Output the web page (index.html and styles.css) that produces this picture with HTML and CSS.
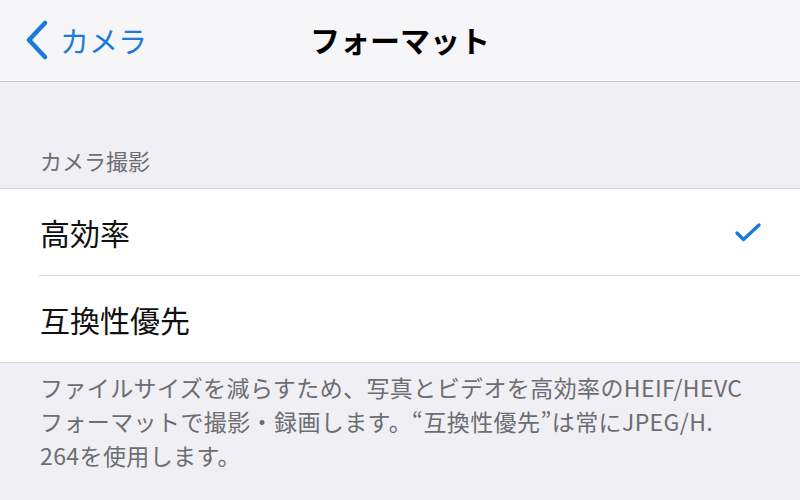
FILE: index.html
```html
<!DOCTYPE html>
<html lang="ja">
  <head>
    <meta charset="utf-8" />
    <title>フォーマット</title>
    <link rel="stylesheet" href="styles.css">
  </head>
  <body>
    <div class="navbar">
      <div class="back">
        <svg class="chevron" width="26" height="42" viewBox="0 0 26 42">
          <path d="M21 4 L5 21 L21 38" fill="none" stroke="#1c7bd8" stroke-width="4.6" stroke-linecap="round" stroke-linejoin="round" />
        </svg>
        <span>カメラ</span>
      </div>
      <div class="title">フォーマット</div>
      <div></div>
    </div>

    <div class="section-header">カメラ撮影</div>

    <div class="list">
      <div class="row">
        <span>高効率</span>
        <svg width="28" height="24" viewBox="0 0 28 24">
          <path d="M3 13 L9.5 19.5 L25 5" fill="none" stroke="#1c7bd8" stroke-width="3.4" stroke-linecap="round" stroke-linejoin="round" />
        </svg>
      </div>
      <div class="row">
        <span>互換性優先</span>
      </div>
    </div>

    <div class="footer">
      ファイルサイズを減らすため、写真とビデオを高効率のHEIF/HEVC<br>
      フォーマットで撮影・録画します。“互換性優先”は常にJPEG/H.<br>
      264を使用します。
    </div>
  </body>
</html>
```

FILE: styles.css
```css
body {
  margin: 0;
  background-color: #efeff4;
  font-family: "Noto Sans CJK JP", "Noto Sans", sans-serif;
  color: #111;
}

.navbar {
  height: 81px;
  background-color: #f6f6f8;
  border-bottom: 1px solid #c8c8cc;
  display: grid;
  grid-template-columns: 1fr auto 1fr;
  align-items: center;
}

.back {
  display: flex;
  align-items: center;
  gap: 10px;
  padding-left: 24px;
  color: #1c7bd8;
  font-size: 29px;
  margin-top: -2px;
}

.title {
  font-size: 30px;
  font-weight: bold;
  color: #000;
  margin-top: -4px;
}

.section-header {
  height: 106px;
  box-sizing: border-box;
  display: flex;
  align-items: flex-end;
  padding: 0 40px 12px;
  font-size: 22px;
  color: #6d6d72;
}

.list {
  background-color: #fff;
  border-top: 1px solid #d9d9dd;
  border-bottom: 1px solid #d9d9dd;
}

.row {
  height: 86px;
  margin-left: 39px;
  padding-right: 38px;
  display: flex;
  align-items: center;
  justify-content: space-between;
  font-size: 30px;
  padding-left: 1px;
}

.row + .row {
  border-top: 1px solid #dcdce0;
}

.footer {
  padding: 7px 20px 0 40px;
  font-size: 23px;
  letter-spacing: 0.4px;
  line-height: 34px;
  color: #6d6d72;
  white-space: nowrap;
}
```
